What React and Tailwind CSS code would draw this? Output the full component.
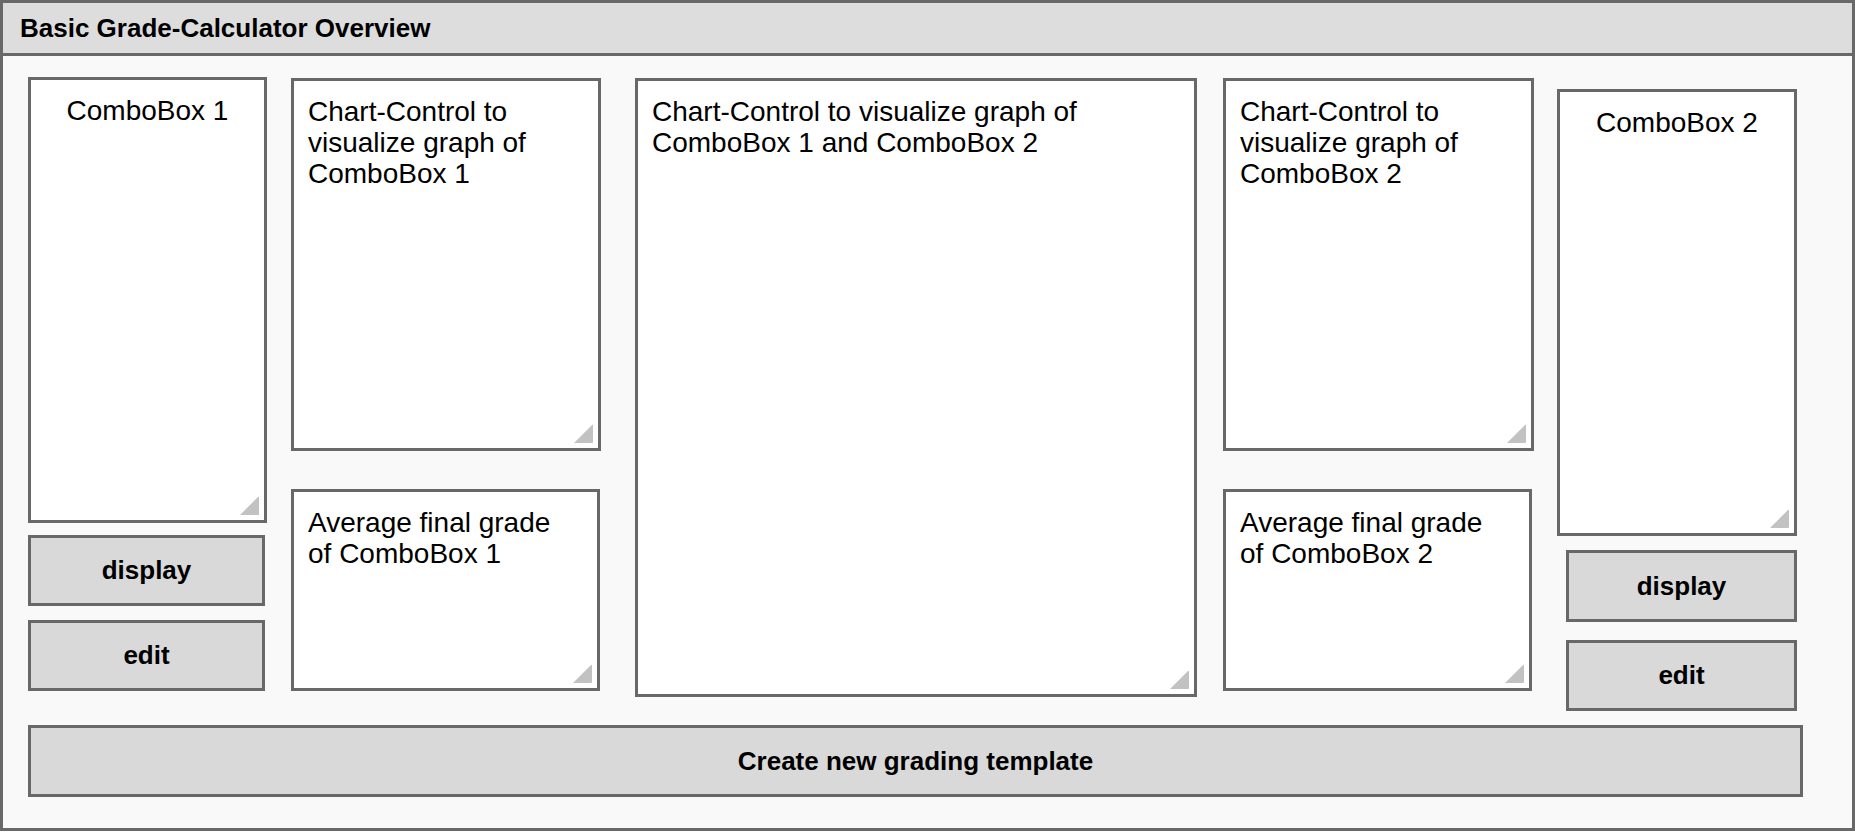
import React from "react";

const Grip = () => (
  <svg
    className="absolute right-[4px] bottom-[4px]"
    width="21"
    height="21"
    viewBox="0 0 21 21"
  >
    <path d="M1 20 L18.5 2.5 Q20 1 20 3 L20 19 Q20 20 19 20 Z" fill="#c2c2c2" />
  </svg>
);

const Box = ({ className = "", center = false, children }) => (
  <div
    className={`relative bg-white border-[3px] border-[#686868] pt-[15px] px-[14px] text-[28px] leading-[31px] text-black ${
      center ? "text-center" : ""
    } ${className}`}
  >
    {children}
    <Grip />
  </div>
);

const Button = ({ className = "", children }) => (
  <div
    className={`flex items-center justify-center bg-[#d9d9d9] border-[3px] border-[#686868] text-[26px] font-bold text-black ${className}`}
  >
    {children}
  </div>
);

const App = () => {
  return (
    <div
      className="w-full h-[831px] flex flex-col bg-[#f9f9f9] border-[3px] border-[#686868]"
      style={{ fontFamily: '"Liberation Sans", Arial, sans-serif' }}
    >
      <div className="h-[53px] shrink-0 flex items-center pl-[17px] pt-[1px] bg-[#dddddd] border-b-[3px] border-[#686868] text-[26px] font-bold text-black">
        Basic Grade-Calculator Overview
      </div>

      <div className="pl-[25px] pt-[21px]">
        <div className="flex items-start">
          {/* combobox 1 column */}
          <div className="w-[239px] flex flex-col">
            <Box center className="h-[446px]">
              ComboBox 1
            </Box>
            <Button className="mt-[12px] h-[71px] w-[237px]">display</Button>
            <Button className="mt-[14px] h-[71px] w-[237px]">edit</Button>
          </div>

          {/* chart + average 1 */}
          <div className="ml-[24px] mt-[1px] w-[310px] flex flex-col">
            <Box className="h-[373px]">
              Chart-Control to
              <br />
              visualize graph of
              <br />
              ComboBox 1
            </Box>
            <Box className="mt-[38px] h-[202px] w-[309px]">
              Average final grade
              <br />
              of ComboBox 1
            </Box>
          </div>

          {/* combined chart */}
          <div className="ml-[34px] mt-[1px] w-[562px]">
            <Box className="h-[619px]">
              Chart-Control to visualize graph of
              <br />
              ComboBox 1 and ComboBox 2
            </Box>
          </div>

          {/* chart + average 2 */}
          <div className="ml-[26px] mt-[1px] w-[311px] flex flex-col">
            <Box className="h-[373px]">
              Chart-Control to
              <br />
              visualize graph of
              <br />
              ComboBox 2
            </Box>
            <Box className="mt-[38px] h-[202px] w-[309px]">
              Average final grade
              <br />
              of ComboBox 2
            </Box>
          </div>

          {/* combobox 2 column */}
          <div className="ml-[23px] mt-[12px] w-[240px] flex flex-col">
            <Box center className="h-[447px]">
              ComboBox 2
            </Box>
            <Button className="ml-[9px] mt-[14px] h-[72px] w-[231px]">
              display
            </Button>
            <Button className="ml-[9px] mt-[18px] h-[71px] w-[231px]">
              edit
            </Button>
          </div>
        </div>

        <Button className="mt-[14px] h-[72px] w-[1775px]">
          Create new grading template
        </Button>
      </div>
    </div>
  );
};

export default App;
